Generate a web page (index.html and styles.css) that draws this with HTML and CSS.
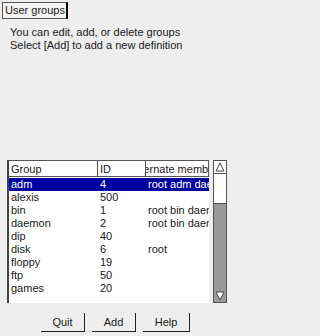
FILE: index.html
```html
<!DOCTYPE html>
<html>
<head>
<meta charset="utf-8">
<link rel="stylesheet" href="styles.css">
</head>
<body>
<div class="page">
  <div class="tabrow"><div class="tab">User groups</div></div>
  <div class="msg">
    <div>You can edit, add, or delete groups</div>
    <div>Select [Add] to add a new definition</div>
  </div>
  <div class="listarea">
    <div class="list">
      <div class="row head">
        <div class="c c1">Group</div>
        <div class="c c2">ID</div>
        <div class="c c3 center">Alternate members</div>
      </div>
      <div class="row sel"><div class="c c1">adm</div><div class="c c2">4</div><div class="c c3">root adm daemon</div></div>
      <div class="row"><div class="c c1">alexis</div><div class="c c2">500</div><div class="c c3"></div></div>
      <div class="row"><div class="c c1">bin</div><div class="c c2">1</div><div class="c c3">root bin daemon</div></div>
      <div class="row"><div class="c c1">daemon</div><div class="c c2">2</div><div class="c c3">root bin daemon</div></div>
      <div class="row"><div class="c c1">dip</div><div class="c c2">40</div><div class="c c3"></div></div>
      <div class="row"><div class="c c1">disk</div><div class="c c2">6</div><div class="c c3">root</div></div>
      <div class="row"><div class="c c1">floppy</div><div class="c c2">19</div><div class="c c3"></div></div>
      <div class="row"><div class="c c1">ftp</div><div class="c c2">50</div><div class="c c3"></div></div>
      <div class="row"><div class="c c1">games</div><div class="c c2">20</div><div class="c c3"></div></div>
    </div>
    <div class="scroll">
      <div class="arrow up"><svg width="10" height="10" viewBox="0 0 10 10"><path d="M1 9 L5 1 L9 9 Z" fill="none" stroke="#444" stroke-width="1"/></svg></div>
      <div class="thumb"></div>
      <div class="trough"></div>
      <div class="arrow down"><svg width="10" height="10" viewBox="0 0 10 10"><path d="M1 1 L5 9 L9 1 Z" fill="#fff" stroke="#444" stroke-width="1"/></svg></div>
    </div>
  </div>
  <div class="buttons">
    <div class="btn">Quit</div>
    <div class="btn">Add</div>
    <div class="btn">Help</div>
  </div>
</div>
</body>
</html>
```
FILE: styles.css
```css
html, body {
  margin: 0;
  padding: 0;
  background: #eeeeee;
}
body {
  font-family: "Liberation Sans", Arial, sans-serif;
  font-size: 11px;
  color: #1a1a1a;
}
.page {
  width: 230px;
  height: 336px;
  display: flex;
  flex-direction: column;
}
.tabrow {
  padding: 2px 0 0 2px;
  height: 18px;
}
.tab {
  display: inline-block;
  height: 15px;
  line-height: 15px;
  padding: 0 1px 0 2px;
  border: 1px solid #555;
  border-right: 2px solid #000;
  background: #f4f4f4;
}
.msg {
  padding: 6px 0 0 10px;
  line-height: 13px;
}
.listarea {
  margin: 108px 0 0 7px;
  display: flex;
  gap: 4px;
  height: 143px;
}
.list {
  width: 200px;
  background: #fff;
  border-left: 2px solid #444;
  border-top: 1px solid #555;
  overflow: hidden;
}
.row {
  display: flex;
  height: 13px;
  line-height: 13px;
}
.row.head {
  height: 16px;
  line-height: 16px;
  margin-bottom: 1px;
}
.row.head .c {
  border-right: 1px solid #555;
  border-bottom: 1px solid #555;
}
.c {
  white-space: nowrap;
  overflow: hidden;
  box-sizing: border-box;
  padding-left: 2px;
}
.c1 { width: 89px; }
.c2 { width: 48px; }
.c3 { width: 63px; }
.center { display: flex; justify-content: center; padding: 0; }
.sel {
  background: #0000a0;
  color: #fff;
}
.scroll {
  width: 12px;
  display: flex;
  flex-direction: column;
  border: 1px solid #555;
  background: #fff;
}
.arrow {
  height: 12px;
  display: flex;
  align-items: center;
  justify-content: center;
  background: #fff;
}
.up { border-bottom: 1px solid #555; }
.thumb {
  height: 29px;
  border-bottom: 1px solid #555;
}
.trough {
  flex: 1;
  background: #999;
}
.down { background: #999; }
.buttons {
  display: flex;
  gap: 7px;
  padding: 10px 0 0 41px;
}
.btn {
  width: 43px;
  height: 18px;
  line-height: 18px;
  text-align: center;
  border-right: 1px solid #222;
  border-bottom: 1px solid #222;
}
.btn:last-child { width: 46px; }
```
